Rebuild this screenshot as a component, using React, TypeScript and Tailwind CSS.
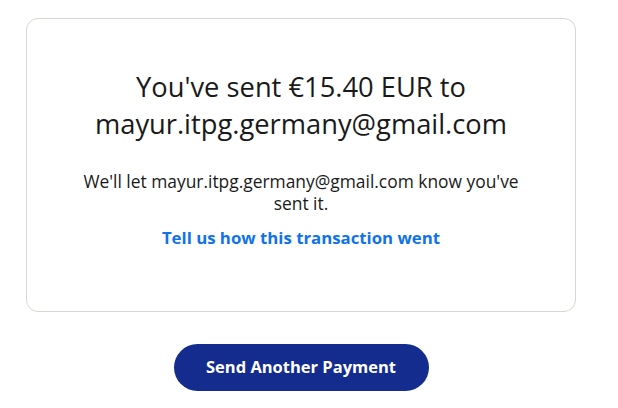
export default function App() {
  return (
    <div className="min-h-[408px] bg-white pt-[18px] font-['Open_Sans',sans-serif] text-[#1a1a1a]">
      <div className="ml-[26px] w-[550px]">
        <div className="flex flex-col items-center rounded-[12px] border border-[#d8d8d2] px-10 pt-[49px] pb-[62px] text-center">
          <h1 className="text-[27.3px] leading-[37px] font-normal">
            You've sent €15.40 EUR to
            <br />
            mayur.itpg.germany@gmail.com
          </h1>
          <p className="mt-[28px] text-[17.4px] leading-[22px]">
            We'll let mayur.itpg.germany@gmail.com know you've
            <br />
            sent it.
          </p>
          <a href="#" className="mt-[13px] text-[16.8px] font-bold leading-[22px] text-[#1072eb]">
            Tell us how this transaction went
          </a>
        </div>
        <div className="mt-[32px] flex justify-center">
          <button className="h-[47px] w-[255px] rounded-full bg-[#142c8e] text-[16.5px] font-bold text-white">
            Send Another Payment
          </button>
        </div>
      </div>
    </div>
  );
}
